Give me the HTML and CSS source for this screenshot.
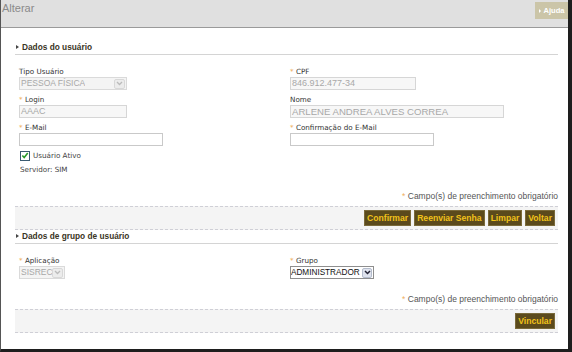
FILE: index.html
```html
<!DOCTYPE html>
<html lang="pt-BR">
<head>
<meta charset="utf-8">
<title>Alterar</title>
<link rel="stylesheet" href="styles.css">
</head>
<body>
<div class="frame">
  <div class="header">
    <span class="header-title">Alterar</span>
    <span class="help-btn"><span class="help-tri"></span>Ajuda</span>
  </div>
  <div class="content">
    <div class="section">
      <div class="section-title"><span class="tri"></span>Dados do usuário</div>
      <div class="form-grid">
        <div class="field">
          <div class="label">Tipo Usuário</div>
          <div class="select disabled w108"><span class="select-text">PESSOA FÍSICA</span><span class="arrow-box soft"><svg width="7" height="5" viewBox="0 0 7 5"><path d="M1 1 L3.5 3.5 L6 1" fill="none" stroke="#bbb" stroke-width="1.3"/></svg></span></div>
        </div>
        <div class="field">
          <div class="label"><span class="req">*</span> CPF</div>
          <div class="input disabled w126">846.912.477-34</div>
        </div>
        <div class="field">
          <div class="label"><span class="req">*</span> Login</div>
          <div class="input disabled w108">AAAC</div>
        </div>
        <div class="field">
          <div class="label">Nome</div>
          <div class="input disabled wide-text w214">ARLENE ANDREA ALVES CORREA</div>
        </div>
        <div class="field">
          <div class="label"><span class="req">*</span> E-Mail</div>
          <div class="input w144"></div>
        </div>
        <div class="field">
          <div class="label"><span class="req">*</span> Confirmação do E-Mail</div>
          <div class="input w144"></div>
        </div>
      </div>
      <div class="check-row">
        <span class="checkbox"><svg width="9" height="9" viewBox="0 0 9 9"><path d="M1.5 4.5 L3.6 6.8 L7.6 1.8" fill="none" stroke="#2a9a2a" stroke-width="1.8"/></svg></span>
        <span class="check-label">Usuário Ativo</span>
      </div>
      <div class="info">Servidor: SIM</div>
      <div class="req-note"><span class="req">*</span> Campo(s) de preenchimento obrigatório</div>
      <div class="button-bar">
        <span class="btn">Confirmar</span>
        <span class="btn">Reenviar Senha</span>
        <span class="btn">Limpar</span>
        <span class="btn">Voltar</span>
      </div>
    </div>
    <div class="section">
      <div class="section-title second"><span class="tri"></span>Dados de grupo de usuário</div>
      <div class="form-grid">
        <div class="field">
          <div class="label"><span class="req">*</span> Aplicação</div>
          <div class="select disabled w46"><span class="select-text">SISREC</span><span class="arrow-box soft"><svg width="7" height="5" viewBox="0 0 7 5"><path d="M1 1 L3.5 3.5 L6 1" fill="none" stroke="#bbb" stroke-width="1.3"/></svg></span></div>
        </div>
        <div class="field">
          <div class="label"><span class="req">*</span> Grupo</div>
          <div class="select active w84"><span class="select-text">ADMINISTRADOR</span><span class="arrow-box"><svg width="7" height="5" viewBox="0 0 7 5"><path d="M1 1 L3.5 3.5 L6 1" fill="none" stroke="#223" stroke-width="1.5"/></svg></span></div>
        </div>
      </div>
      <div class="req-note second-note"><span class="req">*</span> Campo(s) de preenchimento obrigatório</div>
      <div class="button-bar">
        <span class="btn">Vincular</span>
      </div>
    </div>
  </div>
</div>
</body>
</html>
```

FILE: styles.css
```css
* { box-sizing: border-box; }

html, body {
  margin: 0;
  padding: 0;
  background: #fff;
}

.frame {
  width: 572px;
  height: 352px;
  border-left: 1px solid #555;
  border-right: 4px solid #1e1e1e;
  border-bottom: 3px solid #1e1e1e;
  background: #fff;
  font-family: "Liberation Sans", Arial, sans-serif;
  overflow: hidden;
}

.header {
  height: 28px;
  background: #e0e0e0;
  border-bottom: 1px solid #9a9a9a;
  display: flex;
  justify-content: space-between;
  align-items: flex-start;
}

.header-title {
  font-size: 11px;
  color: #8a8a8a;
  padding: 2px 0 0 1px;
  line-height: 13px;
}

.help-btn {
  margin-top: 2px;
  height: 17px;
  width: 33px;
  background: #cbc5a8;
  color: #fff;
  font-size: 7.5px;
  font-weight: bold;
  line-height: 17px;
  display: flex;
  align-items: center;
  justify-content: center;
}

.help-tri {
  width: 0;
  height: 0;
  border-top: 2px solid transparent;
  border-bottom: 2px solid transparent;
  border-left: 2px solid #fff;
  margin-right: 3px;
}

.content {
  padding: 0 10px 0 14px;
}

.section-title {
  margin-top: 14px;
  height: 13px;
  border-bottom: 1px solid #d4d4d4;
  font-size: 8.3px;
  font-weight: bold;
  color: #3a3524;
  line-height: 10px;
  display: flex;
  align-items: flex-start;
}

.section-title.second {
  margin-top: 1px;
}

.tri {
  width: 0;
  height: 0;
  border-top: 2.5px solid transparent;
  border-bottom: 2.5px solid transparent;
  border-left: 3px solid #444;
  margin: 3px 3px 0 1px;
}

.form-grid {
  display: grid;
  grid-template-columns: 271px 1fr;
  padding-left: 4px;
  margin-top: 12px;
  row-gap: 5px;
}

.field {
  height: 23px;
}

.label {
  font-family: "DejaVu Sans", Verdana, sans-serif;
  font-size: 7.2px;
  color: #333;
  line-height: 9px;
  height: 10px;
}

.req {
  color: #f0b060;
}

.input, .select {
  height: 13px;
  border: 1px solid #c9c9c9;
  background: #fff;
  font-size: 9px;
  line-height: 11px;
  padding-left: 1px;
  color: #a8a8a8;
  white-space: nowrap;
  overflow: hidden;
}

.input.disabled {
  background: #f7f7f7;
  border-color: #d6d6d6;
}

.input.wide-text {
  font-size: 9.6px;
}

.select {
  font-size: 8.5px;
  display: flex;
  align-items: center;
  justify-content: space-between;
  padding-right: 1px;
}

.select.disabled {
  background: #f4f4f4;
  border-color: #dadada;
}

.select.active {
  color: #111;
  border-color: #8e8e8e;
  background: #fff;
  font-size: 8.2px;
  padding-left: 0;
}

.select-text {
  overflow: hidden;
}

.arrow-box {
  width: 11px;
  height: 10px;
  border: 1px solid #d8d8d8;
  border-radius: 2px;
  background: #ececec;
  display: flex;
  align-items: center;
  justify-content: center;
  flex-shrink: 0;
}

.select.active .arrow-box {
  width: 10px;
  background: #dfe3ee;
  border-color: #b4bccc;
}

.w46 { width: 46px; }
.w84 { width: 84px; }
.w108 { width: 108px; }
.w126 { width: 126px; }
.w144 { width: 144px; }
.w214 { width: 214px; }

.check-row {
  display: flex;
  align-items: center;
  padding-left: 5px;
  margin-top: 4px;
  height: 11px;
}

.checkbox {
  width: 10px;
  height: 10px;
  border: 1px solid #3a5a70;
  background: #fff;
  display: flex;
  align-items: center;
  justify-content: center;
}

.check-label {
  font-family: "DejaVu Sans", Verdana, sans-serif;
  font-size: 7.2px;
  color: #444;
  margin-left: 3px;
}

.info {
  font-family: "DejaVu Sans", Verdana, sans-serif;
  font-size: 7.2px;
  color: #444;
  padding-left: 5px;
  margin-top: 4px;
  line-height: 10px;
}

.req-note {
  text-align: right;
  font-size: 8.5px;
  color: #555;
  line-height: 10px;
  margin-top: 16px;
}

.req-note.second-note {
  margin-top: 15px;
}

.button-bar {
  margin-top: 5px;
  height: 24px;
  border-top: 1px dashed #cfcfd6;
  border-bottom: 1px dashed #cfcfd6;
  background: #f4f4f4;
  display: flex;
  justify-content: flex-end;
  align-items: center;
  gap: 3px;
  padding-right: 3px;
}

.btn {
  height: 16px;
  background: #5b4a1c;
  border: 1px solid #7a6a3a;
  color: #f2c21a;
  font-size: 8.6px;
  font-weight: bold;
  line-height: 14px;
  padding: 0 2px;
}
```
